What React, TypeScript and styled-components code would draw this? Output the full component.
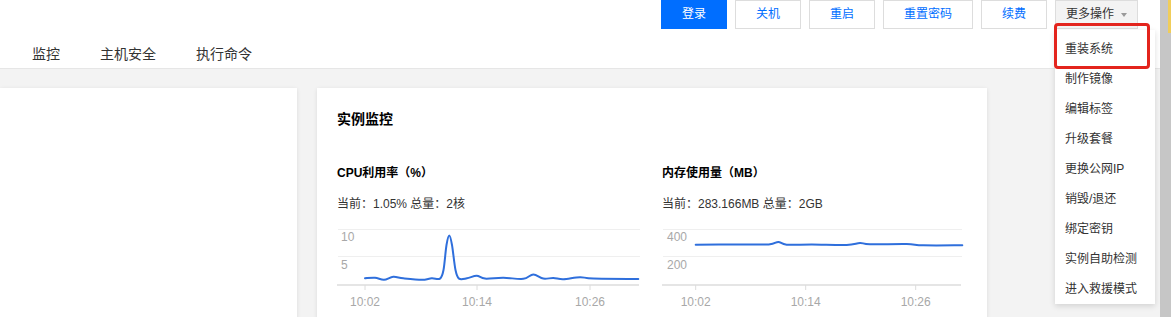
import React from "react";
import styled, { createGlobalStyle } from "styled-components";

const GlobalStyle = createGlobalStyle`
  html, body { margin: 0; padding: 0; }
  body {
    font-family: "Liberation Sans", "Noto Sans CJK SC", sans-serif;
    font-size: 12px;
    color: #333;
    background: #fff;
  }
`;

const Page = styled.div`
  position: relative;
  display: flex;
  width: 1171px;
  height: 317px;
  overflow: hidden;
`;

const Main = styled.div`
  flex: 1;
  min-width: 0;
  display: flex;
  flex-direction: column;
  background: #f3f3f3;
`;

const Header = styled.header`
  background: #fff;
  border-bottom: 1px solid #e6e6e6;
`;

const ActionBar = styled.div`
  display: flex;
  justify-content: flex-end;
  gap: 8px;
  height: 29px;
  padding-right: 22px;
`;

const Button = styled.button<{ $primary?: boolean }>`
  box-sizing: border-box;
  height: 29px;
  padding: 0 20px;
  border: 1px solid ${(p) => (p.$primary ? "#006eff" : "#dddddd")};
  border-radius: 0;
  background: ${(p) => (p.$primary ? "#006eff" : "#ffffff")};
  color: ${(p) => (p.$primary ? "#ffffff" : "#006eff")};
  font-family: inherit;
  font-size: 12px;
  line-height: 27px;
  cursor: pointer;
  white-space: nowrap;
`;

const MoreWrap = styled.div`
  position: relative;
`;

const MoreButton = styled(Button)`
  display: flex;
  align-items: center;
  gap: 7px;
  padding: 0 10px;
  background: #f3f3f3;
  color: #333;
`;

const Caret = styled.span`
  width: 0;
  height: 0;
  border-left: 3.5px solid transparent;
  border-right: 3.5px solid transparent;
  border-top: 4px solid #9a9a9a;
`;

const Menu = styled.ul`
  position: absolute;
  top: 30px;
  left: 0;
  z-index: 10;
  width: 100px;
  margin: 0;
  padding: 4px 0 0;
  list-style: none;
  background: #fff;
  box-shadow: 0 2px 6px rgba(0, 0, 0, 0.14);
`;

const MenuItem = styled.li`
  height: 30px;
  padding: 0 10px;
  font-size: 12px;
  line-height: 30px;
  color: #333;
  white-space: nowrap;
`;

const Highlight = styled.div`
  position: absolute;
  top: -7px;
  left: -1px;
  width: 96px;
  height: 46px;
  box-sizing: border-box;
  border: 3px solid #e3241d;
  border-radius: 4px;
  pointer-events: none;
`;

const TabBar = styled.nav`
  box-sizing: border-box;
  display: flex;
  height: 39px;
  padding: 11px 0 0 12px;
`;

const Tab = styled.div`
  padding: 0 20px;
  font-size: 14px;
  line-height: 28px;
  color: #333;
`;

const Content = styled.div`
  flex: 1;
  display: grid;
  grid-template-columns: 297px 670px;
  column-gap: 20px;
  padding-top: 19px;
`;

const Card = styled.section`
  background: #fff;
  box-shadow: 0 1px 4px rgba(0, 0, 0, 0.1);
`;

const PanelCard = styled(Card)`
  padding: 20px;
`;

const CardTitle = styled.h3`
  margin: 0;
  font-size: 14px;
  font-weight: bold;
  line-height: 22px;
  color: #000;
`;

const ChartGrid = styled.div`
  display: grid;
  grid-template-columns: 305px 305px;
  column-gap: 20px;
  margin-top: 34px;
`;

const ChartTitle = styled.div`
  font-size: 12px;
  font-weight: bold;
  line-height: 18px;
  color: #000;
`;

const ChartMeta = styled.div`
  margin-top: 13px;
  font-size: 12px;
  line-height: 18px;
  color: #333;
`;

const ChartSvg = styled.svg`
  display: block;
  margin-top: 7px;
  overflow: visible;
`;

const EdgeStrip = styled.aside`
  width: 11px;
  display: flex;
  justify-content: flex-end;
  align-items: flex-start;
  background: #c6c6c6;
`;

const EdgeMarker = styled.div`
  width: 3px;
  height: 33px;
  background: #f0cd5a;
`;

type Pt = [number, number];

function smoothPath(pts: Pt[]): string {
  let d = `M${pts[0][0]},${pts[0][1]}`;
  const t = 1 / 6;
  for (let i = 0; i < pts.length - 1; i++) {
    const p0 = pts[i - 1] || pts[i];
    const p1 = pts[i];
    const p2 = pts[i + 1];
    const p3 = pts[i + 2] || p2;
    const c1x = p1[0] + (p2[0] - p0[0]) * t;
    const c1y = p1[1] + (p2[1] - p0[1]) * t;
    const c2x = p2[0] - (p3[0] - p1[0]) * t;
    const c2y = p2[1] - (p3[1] - p1[1]) * t;
    d += ` C${c1x.toFixed(2)},${c1y.toFixed(2)} ${c2x.toFixed(2)},${c2y.toFixed(2)} ${p2[0]},${p2[1]}`;
  }
  return d;
}

interface ChartProps {
  yLabels: { text: string; y: number }[];
  labelX: number;
  gridEnd: number;
  ticks: number[];
  xLabels: string[];
  points: Pt[];
}

const LineChart: React.FC<ChartProps> = ({ yLabels, labelX, gridEnd, ticks, xLabels, points }) => (
  <ChartSvg width={305} height={95} viewBox="0 0 305 95">
    <line x1={1} y1={9.5} x2={gridEnd} y2={9.5} stroke="#efefef" strokeWidth={1} />
    <line x1={1} y1={36.5} x2={gridEnd} y2={36.5} stroke="#efefef" strokeWidth={1} />
    <line x1={0} y1={65} x2={gridEnd - 1} y2={65} stroke="#dcdcdc" strokeWidth={1.5} />
    {ticks.map((x) => (
      <line key={x} x1={x} y1={65} x2={x} y2={70} stroke="#dcdcdc" strokeWidth={1} />
    ))}
    {yLabels.map((l) => (
      <text key={l.text} x={labelX} y={l.y} fontSize={12} fill="#a8a8a8">
        {l.text}
      </text>
    ))}
    {xLabels.map((l, i) => (
      <text key={l} x={ticks[i]} y={85.5} fontSize={12} fill="#a8a8a8" textAnchor="middle">
        {l}
      </text>
    ))}
    <path d={smoothPath(points)} fill="none" stroke="#2f6fdc" strokeWidth={2} strokeLinejoin="round" strokeLinecap="round" />
  </ChartSvg>
);

const cpuPoints: Pt[] = [
  [28, 58.3], [38, 57.7], [47, 59.8], [56.3, 56.8], [66.3, 58.3], [84.7, 59.8], [94.7, 58.3],
  [103, 58.6], [106.5, 50], [109.5, 25], [112.3, 15.5], [115, 25], [118.5, 50], [122, 58.6],
  [130, 58.3], [139.7, 55.8], [148, 58.6], [166.3, 57.8], [186.3, 58.8], [196.3, 54.4],
  [206.3, 58.6], [216.3, 58], [226.3, 59.2], [243, 57.2], [256.3, 58.6], [301.3, 59],
];

const memPoints: Pt[] = [
  [33.7, 24.7], [73, 24.4], [106.7, 24.4], [116.3, 22], [124.7, 24.7], [150, 24.5],
  [184.7, 24.9], [198, 23], [208, 24.3], [244.7, 24.1], [261.3, 25.3], [300.3, 25.3],
];

const menuItems = [
  "重装系统",
  "制作镜像",
  "编辑标签",
  "升级套餐",
  "更换公网IP",
  "销毁/退还",
  "绑定密钥",
  "实例自助检测",
  "进入救援模式",
];

export default function App() {
  return (
    <>
      <GlobalStyle />
      <Page>
        <Main>
          <Header>
            <ActionBar>
              <Button $primary>登录</Button>
              <Button>关机</Button>
              <Button>重启</Button>
              <Button>重置密码</Button>
              <Button>续费</Button>
              <MoreWrap>
                <MoreButton>
                  更多操作
                  <Caret />
                </MoreButton>
                <Menu>
                  <Highlight />
                  {menuItems.map((m) => (
                    <MenuItem key={m}>{m}</MenuItem>
                  ))}
                </Menu>
              </MoreWrap>
            </ActionBar>
            <TabBar>
              <Tab>监控</Tab>
              <Tab>主机安全</Tab>
              <Tab>执行命令</Tab>
            </TabBar>
          </Header>
          <Content>
            <Card />
            <PanelCard>
              <CardTitle>实例监控</CardTitle>
              <ChartGrid>
                <div>
                  <ChartTitle>CPU利用率（%）</ChartTitle>
                  <ChartMeta>当前：1.05% 总量：2核</ChartMeta>
                  <LineChart
                    yLabels={[
                      { text: "10", y: 21 },
                      { text: "5", y: 49.3 },
                    ]}
                    labelX={4}
                    gridEnd={303}
                    ticks={[28, 140, 253]}
                    xLabels={["10:02", "10:14", "10:26"]}
                    points={cpuPoints}
                  />
                </div>
                <div>
                  <ChartTitle>内存使用量（MB）</ChartTitle>
                  <ChartMeta>当前：283.166MB 总量：2GB</ChartMeta>
                  <LineChart
                    yLabels={[
                      { text: "400", y: 21 },
                      { text: "200", y: 49.3 },
                    ]}
                    labelX={5}
                    gridEnd={300}
                    ticks={[33.7, 143.7, 253.7]}
                    xLabels={["10:02", "10:14", "10:26"]}
                    points={memPoints}
                  />
                </div>
              </ChartGrid>
            </PanelCard>
          </Content>
        </Main>
        <EdgeStrip>
          <EdgeMarker />
        </EdgeStrip>
      </Page>
    </>
  );
}
